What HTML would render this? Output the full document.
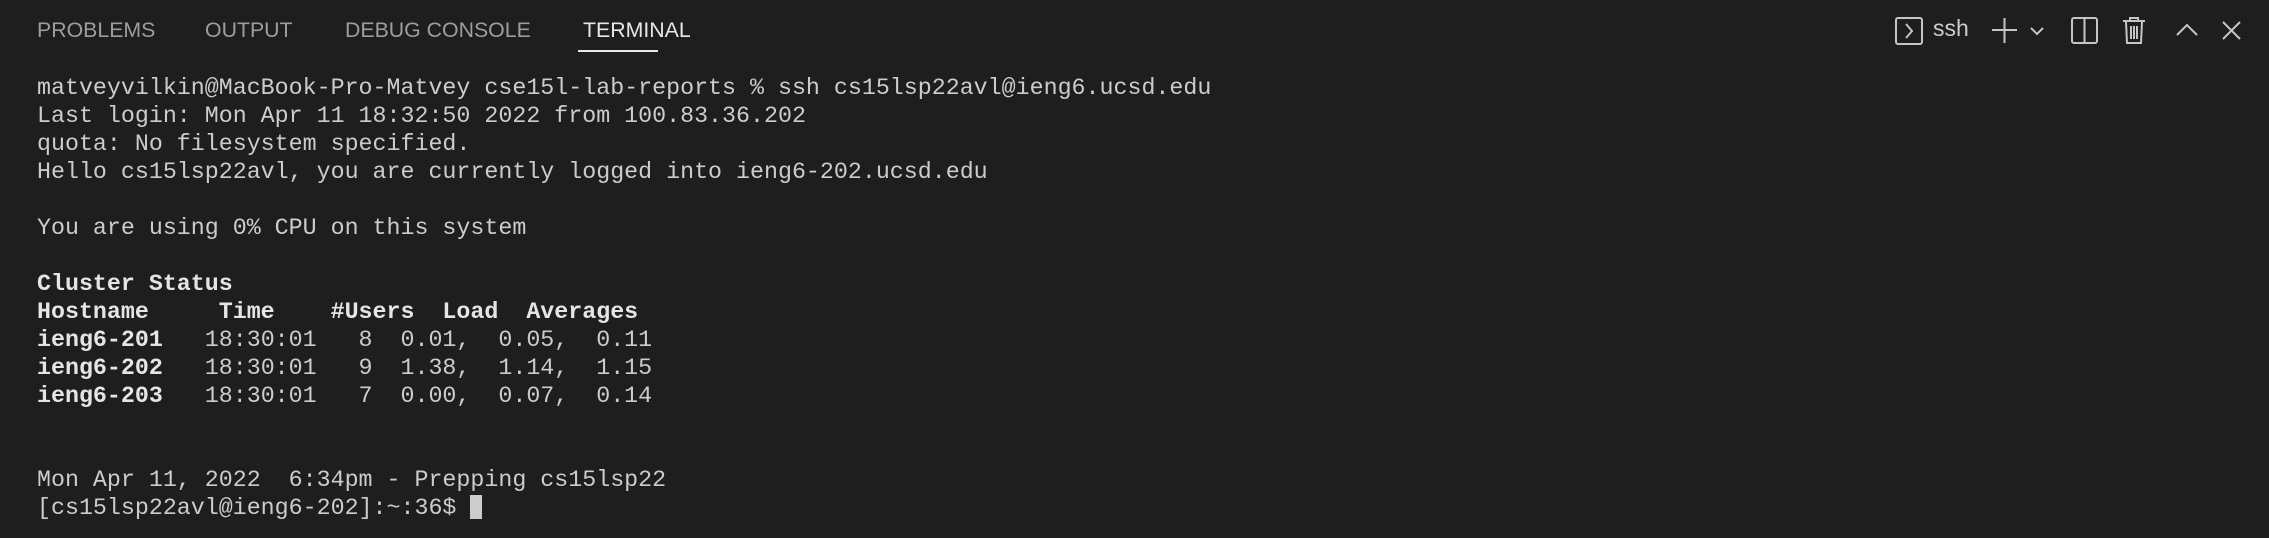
<!DOCTYPE html>
<html><head><meta charset="utf-8"><style>
html,body{margin:0;padding:0;background:#1e1e1e;width:2269px;height:538px;overflow:hidden}
.tab{position:absolute;top:18px;font-family:"Liberation Sans",sans-serif;font-size:21.3px;color:#9d9d9d}
pre{position:absolute;left:37px;top:74px;margin:0;font-family:"Liberation Mono",monospace;font-size:23.3px;line-height:28px;color:#cccccc}
b{font-weight:bold;color:#e5e5e5}
.cur{display:inline-block;width:12px;height:24px;background:#cccccc;vertical-align:-5px}
svg{position:absolute;top:0;left:0}
</style></head><body>
<div class="tab" style="left:37px">PROBLEMS</div>
<div class="tab" style="left:205px">OUTPUT</div>
<div class="tab" style="left:345px">DEBUG CONSOLE</div>
<div class="tab" style="left:583px;color:#e7e7e7">TERMINAL</div>
<div style="position:absolute;left:578px;top:50px;width:80px;height:2px;background:#e7e7e7"></div>
<div style="position:absolute;left:1933px;top:15px;font-family:'Liberation Sans',sans-serif;font-size:23px;color:#cccccc">ssh</div>
<svg width="2269" height="60" fill="none" stroke="#c5c5c5" stroke-width="2">
<rect x="1896" y="18" width="26" height="26" rx="2"/>
<path d="M1906 24l6 7-6 7"/>
<path d="M1992 30h25M2004.5 18v25"/>
<path d="M2031 28l6 6 6-6"/>
<rect x="2072" y="18" width="25" height="25" rx="2"/><path d="M2084.5 18v25"/>
<path d="M2123 21h22M2130 21v-3h8v3M2126 22l1 21h14l1-21M2131 26v13M2134 26v13M2137 26v13"/>
<path d="M2177 35l10-10 10 10"/>
<path d="M2223 22l17 17M2240 22l-17 17"/>
</svg>
<pre>matveyvilkin@MacBook-Pro-Matvey cse15l-lab-reports % ssh cs15lsp22avl@ieng6.ucsd.edu
Last login: Mon Apr 11 18:32:50 2022 from 100.83.36.202
quota: No filesystem specified.
Hello cs15lsp22avl, you are currently logged into ieng6-202.ucsd.edu

You are using 0% CPU on this system

<b>Cluster Status</b>
<b>Hostname     Time    #Users  Load  Averages</b>
<b>ieng6-201</b>   18:30:01   8  0.01,  0.05,  0.11
<b>ieng6-202</b>   18:30:01   9  1.38,  1.14,  1.15
<b>ieng6-203</b>   18:30:01   7  0.00,  0.07,  0.14


Mon Apr 11, 2022  6:34pm - Prepping cs15lsp22
[cs15lsp22avl@ieng6-202]:~:36$ <span class="cur"></span></pre>
</body></html>
